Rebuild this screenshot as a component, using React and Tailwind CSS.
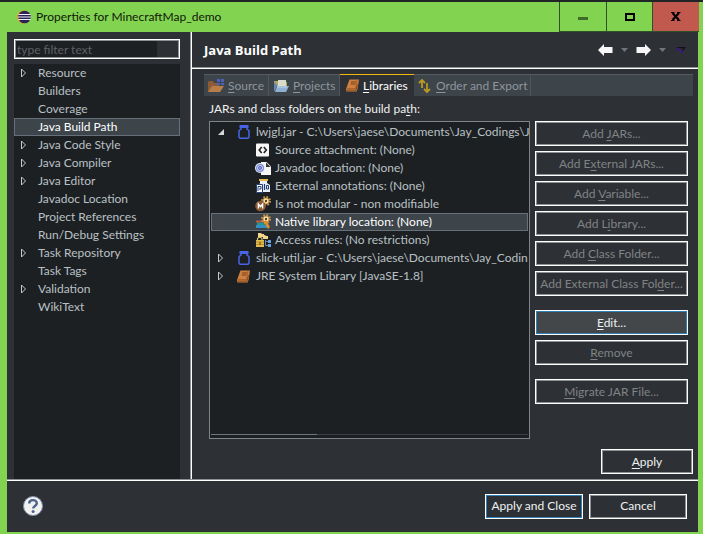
import React from "react";

const BookIcon = () => (
  <svg width="13" height="13" viewBox="0 0 13 13" aria-hidden="true">
    <path d="M3.500.5H13l-1.500 9.500-1 2.500H.5L0 10z" fill="#cf8040" />
    <path d="M5 3h5M4.700 5h4.600" stroke="#74411a" />
    <path d="M.8 9.600h8.700L11 1" stroke="#96561f" strokeWidth=".7" fill="none" />
    <path d="M1 11.200h9l1.500-6" stroke="#6e3d16" strokeWidth=".8" fill="none" />
  </svg>
);

const SourceIcon = () => (
  <svg width="16" height="16" viewBox="0 0 16 16" aria-hidden="true">
    <path d="M0 14V4l1-1h4l1 2h5v3H5z" fill="#8d5c36" />
    <path d="M0 14L4 8h12l-4 6z" fill="#b97d48" />
    <path d="M9 1h3v3H9zM13 1h3v3h-3zM9 5h3v2H9zM13 5h3v2h-3z" fill="#4c60bd" />
  </svg>
);

const ProjectsIcon = () => (
  <svg width="16" height="16" viewBox="0 0 16 16" aria-hidden="true">
    <path d="M1 3h5l1 1h7v4H1z" fill="#b5a26b" />
    <path d="M5 2h8v6H5z" fill="#d9dcc6" />
    <path d="M1 4v9h1l2-6z" fill="#5f86b5" />
    <path d="M4 8h12l-3 6H2z" fill="#8fb0d3" />
    <path d="M4 9h10" stroke="#c1d5e8" />
  </svg>
);

const OrderIcon = () => (
  <svg width="14" height="16" viewBox="0 0 14 16" fill="none" stroke="#b99a20" strokeWidth="1.800" aria-hidden="true">
    <path d="M4 10V2M1 5l3-3 3 3" />
    <path d="M9 5v9M6 11l3 3 3-3" />
  </svg>
);

const JarIcon = () => (
  <svg width="14" height="16" viewBox="0 0 14 16" fill="none" aria-hidden="true">
    <path d="M2.500 1h9v3h-9z" fill="#4763e6" />
    <path d="M4 4v1L2 6.500v6.500l1 1.200h8L12 13V6.500L10 5V4" stroke="#4763e6" strokeWidth="1.500" />
  </svg>
);

const Gear = ({ x, y }) => (
  <g transform={`translate(${x} ${y})`}>
    <circle r="4" fill="none" stroke="#c9974c" strokeWidth="2" strokeDasharray="1.600 1.540" />
    <circle r="3" fill="#fbe6b4" stroke="#c9974c" />
    <circle r="1.200" fill="#5e4320" />
  </g>
);

const SourceAttachIcon = () => (
  <svg width="16" height="16" viewBox="0 0 16 16" aria-hidden="true">
    <rect x="1" y="1.500" width="13" height="13" rx="1" fill="#f7f7f7" />
    <path d="M6.700 5L4.200 8l2.500 3M8.800 5l2.500 3-2.500 3" fill="none" stroke="#222" strokeWidth="1.600" />
  </svg>
);

const JavadocIcon = () => (
  <svg width="16" height="16" viewBox="0 0 16 16" aria-hidden="true">
    <path d="M6 2h5.500L16 6.500V15H6z" fill="#f6f6f6" />
    <path d="M11 2.500V7h4.500z" fill="#333" />
    <circle cx="5" cy="8" r="5" fill="#e4e9fa" />
    <circle cx="5" cy="8" r="3.400" fill="none" stroke="#7a8bd0" strokeWidth="1.200" />
    <circle cx="5" cy="8" r="1.400" fill="none" stroke="#4a5cb8" strokeWidth="1.200" />
  </svg>
);

const AnnotationsIcon = () => (
  <svg width="16" height="16" viewBox="0 0 16 16" aria-hidden="true">
    <path d="M4 1h9v2H4z" fill="#e3b94d" />
    <path d="M5 3h7v2l3 2v7H4V7l1-2z" fill="#e9eff8" />
    <path d="M1.500 6.500h6v8h-6z" fill="#fff" stroke="#23427c" />
    <path d="M3 13V8.500h3V11H4" fill="none" stroke="#203b75" />
    <path d="M9.500 6v6" stroke="#203b75" strokeWidth="1.200" />
    <path d="M11.500 7.500h2v3.500h-2z" fill="none" stroke="#203b75" />
  </svg>
);

const ModularIcon = () => (
  <svg width="16" height="16" viewBox="0 0 16 16" aria-hidden="true">
    <Gear x={11} y={5} />
    <circle cx="5.500" cy="10" r="5.300" fill="#8b5b38" />
    <path d="M3.400 12.500V8l2.100 2.600L7.600 8v4.500" fill="none" stroke="#fff" strokeWidth="1.400" />
  </svg>
);

const NativeIcon = () => (
  <svg width="16" height="16" viewBox="0 0 16 16" aria-hidden="true">
    <path d="M1 6.500h8v2H1z" fill="#c65b45" />
    <path d="M2 8.500h8V11H2z" fill="#27968c" />
    <path d="M1 11h11v3H1z" fill="#318fc4" />
    <Gear x={11} y={5} />
    <path d="M8.500 7.500L11 6l4 7-2 2z" fill="#e58c2b" />
  </svg>
);

const RulesIcon = () => (
  <svg width="16" height="16" viewBox="0 0 16 16" aria-hidden="true">
    <path d="M3 1h3l1 1h2v3H3zM8 3h2l1 1h2v3H8z" fill="#f3d48b" />
    <path d="M2.500 8.500v-2l1-1h2.500l1 1v2" fill="none" stroke="#d8c06a" strokeWidth="1.200" />
    <path d="M1 8h8v7H1z" fill="#e4bd4f" />
    <path d="M1 10h8M1 12.500h8" stroke="#a67d22" strokeWidth=".7" />
    <path d="M4.500 10h1v3h-1z" fill="#57411a" />
    <path d="M10.500 8v5.500H13M10.500 9.500H13" fill="none" stroke="#6c89b2" />
    <path d="M13 8h3v3h-3zM13 12h3v3h-3z" fill="#6aa0dc" />
  </svg>
);

const EclipseIcon = () => (
  <svg width="14" height="14" viewBox="0 0 14 14" aria-hidden="true">
    <circle cx="6.500" cy="7" r="6.500" fill="#f7941e" />
    <circle cx="7.500" cy="7" r="6.300" fill="#2c2255" />
    <path d="M1.300 4.500h12.400M1 7h13M1.300 9.500h12.400" stroke="#f2f0fa" strokeWidth="1.200" />
  </svg>
);

const Arrow = ({ open }) =>
  open ? (
    <svg width="8" height="8" viewBox="0 0 8 8" aria-hidden="true">
      <path d="M7 1v6H1z" fill="#d5d8da" />
    </svg>
  ) : (
    <svg width="8" height="10" viewBox="0 0 8 10" aria-hidden="true">
      <path d="M1.500 1v8l4-4z" fill="none" stroke="#c5c9cc" />
    </svg>
  );

const pages = [
  ["Resource", true],
  ["Builders"],
  ["Coverage"],
  ["Java Build Path"],
  ["Java Code Style", true],
  ["Java Compiler", true],
  ["Java Editor", true],
  ["Javadoc Location"],
  ["Project References"],
  ["Run/Debug Settings"],
  ["Task Repository", true],
  ["Task Tags"],
  ["Validation", true],
  ["WikiText"],
];

const attributes = [
  [SourceAttachIcon, "Source attachment: (None)"],
  [JavadocIcon, "Javadoc location: (None)"],
  [AnnotationsIcon, "External annotations: (None)"],
  [ModularIcon, "Is not modular - non modifiable"],
  [NativeIcon, "Native library location: (None)"],
  [RulesIcon, "Access rules: (No restrictions)"],
];

// A label whose mnemonic letter follows an ampersand.
const Label = ({ text }) => {
  const i = text.indexOf("&");
  if (i < 0) return <span>{text}</span>;
  return (
    <span>
      {text.slice(0, i)}
      <u className="underline-offset-2">{text[i + 1]}</u>
      {text.slice(i + 2)}
    </span>
  );
};

const Button = ({ text, className = "", disabled, focus, lit }) => (
  <button
    type="button"
    disabled={disabled}
    className={`h-[25px] shrink-0 border border-white p-px whitespace-nowrap ${focus ? "bg-[#2f81b7]" : "bg-[#8d9092]"} ${disabled ? "text-[#808385]" : "text-[#eef0f1]"} ${className}`}
  >
    <span className={`flex h-full items-center justify-center ${lit ? "bg-[#43474a]" : "bg-[#2d3135]"}`}>
      <Label text={text} />
    </span>
  </button>
);

const Root = ({ open, icon, children }) => (
  <div className="flex h-[18px] items-center whitespace-nowrap">
    <span className="flex w-[26px] shrink-0 pl-1.5">
      <Arrow open={open} />
    </span>
    <span className="flex w-[19px] shrink-0">{icon}</span>
    {children}
  </div>
);

const Tab = ({ icon, text, active, className }) => (
  <button
    type="button"
    role="tab"
    aria-selected={!!active}
    className={`flex h-[22px] items-center border-t whitespace-nowrap ${active ? "border-[#f2b90c] bg-[#2d3135] text-white" : "border-[#555d63] border-r border-r-[#4f575d] text-[#8e969c]"} ${className}`}
  >
    <span className="flex shrink-0">{icon}</span>
    <Label text={text} />
  </button>
);

export default function App() {
  return (
    <div className="flex min-h-screen flex-col border-t-2 border-[#222526] bg-[#82d350] font-['Lato','Open_Sans',sans-serif] text-[12px] leading-[18px] text-[#b9c0c5]">
      <header className="flex h-[30px] items-start pr-1">
        <div className="flex h-[30px] flex-1 items-center gap-[5px] pl-[17px] text-[#10180b]">
          <EclipseIcon />
          <h1>Properties for MinecraftMap_demo</h1>
        </div>
        <div className="flex h-[30px] border-b border-l border-[#2f5127]">
          <button type="button" aria-label="Minimize" className="flex w-[47px] items-center justify-center border-r border-[#2f5127]">
            <span className="mt-1 h-[3px] w-2.5 bg-[#3f6b28]" />
          </button>
          <button type="button" aria-label="Maximize" className="flex w-[46px] items-center justify-center border-r border-[#2f5127]">
            <span className="h-2 w-2.5 border-2 border-black" />
          </button>
          <button type="button" aria-label="Close" className="flex w-[46px] items-center justify-center bg-[#c2594f]">
            <svg width="10" height="9" viewBox="0 0 10 9" aria-hidden="true">
              <path d="M1.500 1l6.500 7M8 1L1.500 8" stroke="#000" strokeWidth="2" />
              <path d="M0 .5h3.500M6 .5h3.500M0 8.500h3.500M6 8.500h3.500" stroke="#000" />
            </svg>
          </button>
        </div>
      </header>

      <div className="mr-[5px] mb-0.5 ml-[7px] flex flex-1 flex-col bg-[#2d3135]">
        <div className="flex flex-1">
          <nav className="flex w-[185px] shrink-0 flex-col border-r border-white pt-[7px] pl-[7px] shadow-[inset_-1px_0_#8d8f91]">
            <div className="flex h-5 w-[166px] border border-white bg-[#8d9092] p-px">
              <input
                type="text"
                aria-label="Filter pages"
                placeholder="type filter text"
                className="h-full w-[141px] bg-[#1d2023] pl-px outline-none placeholder:text-[#5d6163]"
              />
              <span className="flex-1 bg-[#2d3135]" />
            </div>
            <ul className="mt-[5px] w-[166px] flex-1 bg-[#1d2023]">
              {pages.map(([name, expandable]) => {
                const on = name === "Java Build Path";
                return (
                  <li
                    key={name}
                    className={`flex h-[18px] items-center border whitespace-nowrap ${on ? "border-[#65707a] bg-[#3d444a] text-white" : "border-transparent"}`}
                  >
                    <span className="w-[23px] shrink-0 pl-[5px]">{expandable && <Arrow />}</span>
                    {name}
                  </li>
                );
              })}
            </ul>
          </nav>

          <main className="flex min-w-0 flex-1 flex-col">
            <div className="flex h-[37px] items-center border-b border-white pr-3 pl-3 shadow-[inset_0_-1px_#8d8f91]">
              <h2 className="flex-1 font-['Open_Sans',sans-serif] text-[13px] font-bold text-white">Java Build Path</h2>
              <div className="flex items-center gap-2">
                <button type="button" aria-label="Back">
                  <svg width="15" height="12" viewBox="0 0 15 12" aria-hidden="true">
                    <path d="M0 6l6-6v3h8.500v6H6v3z" fill="#f7f7f7" />
                  </svg>
                </button>
                <button type="button" aria-label="Back history">
                  <svg width="7" height="4" viewBox="0 0 7 4" aria-hidden="true">
                    <path d="M0 0h7L3.500 4z" fill="#707578" />
                  </svg>
                </button>
                <button type="button" aria-label="Forward">
                  <svg width="15" height="12" viewBox="0 0 15 12" aria-hidden="true">
                    <path d="M15 6L9 0v3H.5v6H9v3z" fill="#f7f7f7" />
                  </svg>
                </button>
                <button type="button" aria-label="Forward history">
                  <svg width="7" height="4" viewBox="0 0 7 4" aria-hidden="true">
                    <path d="M0 0h7L3.500 4z" fill="#707578" />
                  </svg>
                </button>
                <button type="button" aria-label="View menu" className="ml-0.5">
                  <svg width="10" height="6" viewBox="0 0 10 6" aria-hidden="true">
                    <path d="M.5.500h8.500l-4 4.500" fill="none" stroke="#15101c" strokeWidth="1.300" />
                    <path d="M.8.800L5 5l1.500-1.500" fill="none" stroke="#43139a" strokeWidth="1.300" />
                  </svg>
                </button>
              </div>
            </div>

            <div className="flex flex-1 flex-col px-[5px] pt-[5px] pl-3">
              <div role="tablist" className="flex h-[22px] bg-[#3d444a]">
                <Tab icon={<SourceIcon />} text="&Source" className="w-[65px] gap-1 pl-1" />
                <Tab icon={<ProjectsIcon />} text="&Projects" className="w-[71px] gap-1 pl-1" />
                <Tab icon={<BookIcon />} text="&Libraries" active className="w-[74px] gap-1 pl-1.5" />
                <Tab icon={<OrderIcon />} text="&Order and Export" className="w-[117px] gap-1 pl-1" />
                <span className="flex-1 border-t border-[#555d63]" />
              </div>
              <div className="pt-1 pl-[5px] text-[#eef0f1]">
                <Label text="JARs and class folders on the build pa&th:" />
              </div>
              <div className="mt-[3px] flex gap-[5px] pr-[5px] pl-[5px]">
                <div className="flex h-[318px] min-w-0 flex-1 flex-col overflow-hidden border border-[#7f8488] bg-[#1d2023] p-px">
                  <Root open icon={<JarIcon />}>
                    {"lwjgl.jar - C:\\Users\\jaese\\Documents\\Jay_Codings\\J"}
                  </Root>
                  {attributes.map(([Icon, text]) => (
                    <div
                      key={text}
                      className={`flex h-[18px] items-center gap-1 border pl-[43px] whitespace-nowrap ${Icon === NativeIcon ? "border-[#65707a] bg-[#3d444a] text-white" : "border-transparent"}`}
                    >
                      <Icon />
                      {text}
                    </div>
                  ))}
                  <Root icon={<JarIcon />}>{"slick-util.jar - C:\\Users\\jaese\\Documents\\Jay_Codin"}</Root>
                  <Root icon={<BookIcon />}>JRE System Library [JavaSE-1.8]</Root>
                  <div className="mt-auto mb-0.5 h-px shrink-0 bg-[#3b3f43]">
                    <div className="h-px w-1/3 bg-[#6c7680]" />
                  </div>
                </div>
                <div className="flex w-[153px] shrink-0 flex-col gap-[5px]">
                  <Button disabled text="Add &JARs..." />
                  <Button disabled text="Add E&xternal JARs..." />
                  <Button disabled text="Add &Variable..." />
                  <Button disabled text="Add L&ibrary..." />
                  <Button disabled text="Add &Class Folder..." />
                  <Button disabled text="Add External Class Fol&der..." />
                  <Button focus lit text="&Edit..." className="mt-[9px]" />
                  <Button disabled text="&Remove" />
                  <Button disabled text="&Migrate JAR File..." className="mt-[9px]" />
                </div>
              </div>
              <div className="flex justify-end pt-2.5 pb-[5px]">
                <Button text="&Apply" className="w-[92px]" />
              </div>
            </div>
          </main>
        </div>

        <footer className="flex h-[53px] items-center gap-1.5 border-t border-[#8d8f91] pr-[11px] pl-4 shadow-[inset_0_1px_#fff]">
          <button type="button" aria-label="Help" className="mr-auto">
            <svg width="20" height="20" viewBox="0 0 20 20" aria-hidden="true">
              <circle cx="10" cy="10" r="9.500" fill="#f1f1f0" stroke="#8290aa" />
              <path d="M6.200 7.500C6.200 3 13.800 3 13.800 7.300c0 2.700-3.600 2.700-3.600 5.200" fill="none" stroke="#4b628a" strokeWidth="2.400" />
              <circle cx="10.100" cy="15.400" r="1.500" fill="#4b628a" />
            </svg>
          </button>
          <Button focus text="Apply and Close" className="w-[98px]" />
          <Button text="Cancel" className="w-[98px]" />
        </footer>
      </div>
    </div>
  );
}
